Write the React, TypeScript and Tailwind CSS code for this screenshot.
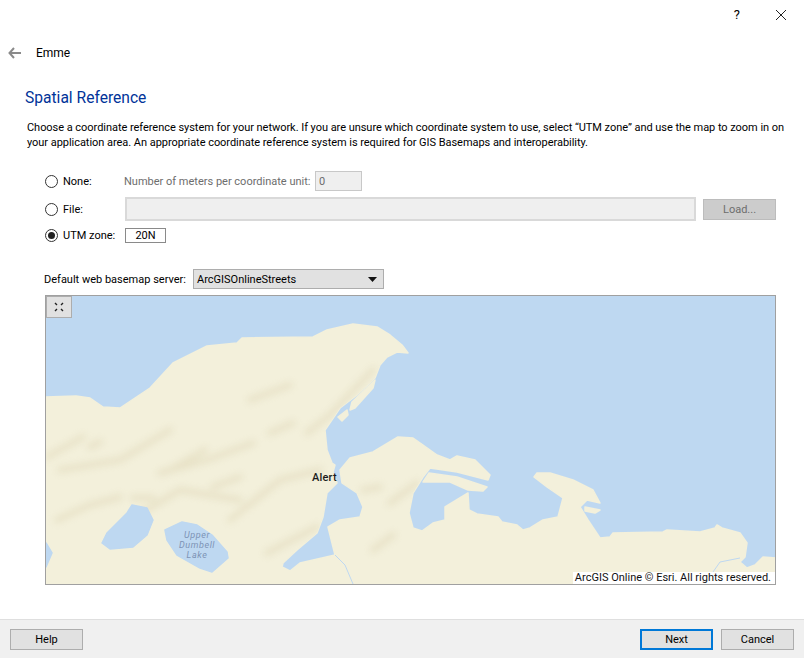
const LAND =
  "M46 397 L76 396 L90 398 L103 407 L120 408 L150 388 L173 363 L207 346 L237 343 L242 338 L313 337 L327 330 L353 324 L377 327 L390 335 L402 345 L408 353 L397 352 L387 357 L380 365 L375 378 L357 395 L340 408 L325 430 L327 450 L332 463 L335 465 L333 472 L337 483 L327 493 L323 517 L317 533 L297 550 L283 563 L282 567 L290 571 L300 563 L335 555 L328 527 L340 520 L360 517 L363 507 L357 493 L342 483 L340 470 L350 458 L373 452 L398 437 L413 438 L423 445 L437 455 L450 460 L457 456 L475 460 L490 475 L488 480 L457 472 L430 468 L423 477 L413 493 L409 513 L413 528 L422 531 L433 523 L445 520 L445 507 L468 493 L469 510 L477 514 L498 517 L502 522 L517 525 L523 530 L530 528 L543 520 L558 517 L563 498 L547 487 L534 477 L537 473 L550 473 L573 480 L593 490 L600 503 L587 500 L580 507 L588 520 L600 538 L610 537 L613 533 L663 532 L667 530 L700 532 L715 528 L717 525 L722 528 L740 533 L747 543 L745 557 L740 562 L747 568 L755 565 L763 557 L776 558 L776 585 L46 585 Z";

const HILLS = [
  "M47 457 L83 437",
  "M90 447 L100 442",
  "M57 520 L90 505 L120 497",
  "M133 498 L153 498",
  "M160 473 L207 460 L253 443",
  "M170 470 L205 450",
  "M213 487 L240 477",
  "M270 433 L293 423",
  "M307 433 L330 415 L373 370",
  "M267 553 L317 527",
  "M373 550 L393 535",
  "M390 503 L417 483",
  "M363 490 L380 487",
  "M130 520 L180 490 L240 500",
  "M230 520 L280 480 L320 470",
  "M250 400 L290 385",
  "M60 470 L120 460 L170 430",
];

export default function App() {
  return (
    <div className="relative flex h-[658px] w-[804px] flex-col overflow-hidden bg-white font-['Roboto','Open_Sans',sans-serif] text-[11px] leading-[15px] text-black">
      <div className="flex h-[29px] items-center justify-end">
        <span className="mr-[35px] text-[13px]">?</span>
        <svg width="12" height="12" viewBox="0 0 12 12" className="mr-[17px]">
          <path d="M1 1 L11 11 M11 1 L1 11" stroke="#222" strokeWidth="1" fill="none" />
        </svg>
      </div>

      <div className="mt-[14px] flex h-[20px] items-center pl-[8px]">
        <svg width="13" height="12" viewBox="0 0 13 12">
          <path d="M6 1 L1.5 6 L6 11 M1.5 6 L13 6" stroke="#8a8a8a" strokeWidth="2" fill="none" />
        </svg>
        <span className="ml-[15px] text-[12px]">Emme</span>
      </div>

      <h1 className="mt-[25px] ml-[25px] text-[15.6px] leading-[20px] text-[#003399]">Spatial Reference</h1>

      <p className="mt-[12px] ml-[27px] w-[765px] tracking-[-0.04px]">
        Choose a coordinate reference system for your network. If you are unsure which coordinate system to use, select “UTM zone” and use the map to zoom in on your application area. An appropriate coordinate reference system is required for GIS Basemaps and interoperability.
      </p>

      <div className="mt-[21px] ml-[45px] flex h-[20px] items-center">
        <Radio />
        <span className="ml-[5px] w-[61px]">None:</span>
        <span className="w-[191px] text-[#6d6d6d]">Number of meters per coordinate unit:</span>
        <div className="flex h-[20px] w-[47px] items-center border border-[#c8c8c8] bg-[#efefef] pl-[3px] text-[#6d6d6d]">0</div>
      </div>

      <div className="mt-[6px] ml-[45px] flex h-[24px] items-center">
        <Radio />
        <span className="ml-[5px] w-[62px]">File:</span>
        <div className="h-[24px] w-[571px] border-2 border-[#d9d9d9] bg-[#efefef]" />
        <div className="ml-[7px] flex h-[21px] w-[73px] items-center justify-center border border-[#bcbcbc] bg-[#cccccc] text-[#6d6d6d]">Load...</div>
      </div>

      <div className="mt-[7px] ml-[45px] flex h-[15px] items-center">
        <Radio checked />
        <span className="ml-[5px] w-[62px]">UTM zone:</span>
        <div className="flex h-[15px] w-[41px] items-center justify-center border border-[#8a8a8a]">20N</div>
      </div>

      <div className="mt-[26px] ml-[44px] flex h-[20px] items-center">
        <span className="w-[149px]">Default web basemap server:</span>
        <div className="flex h-[20px] w-[191px] items-center justify-between border border-[#adadad] bg-[#e1e1e1] pr-[6px] pl-[3px]">
          ArcGISOnlineStreets
          <svg width="9" height="5" viewBox="0 0 9 5">
            <path d="M0 0 L9 0 L4.5 5 Z" fill="#111" />
          </svg>
        </div>
      </div>

      <div className="relative mt-[6px] ml-[45px] h-[290px] w-[731px] overflow-hidden border border-[#a0a0a0] bg-[#bed8f1]">
        <svg width="729" height="288" viewBox="46 296 729 288" className="block">
          <defs>
            <filter id="hillBlur" x="-30%" y="-30%" width="160%" height="160%">
              <feGaussianBlur stdDeviation="3.5" />
            </filter>
            <filter id="soften" x="-2%" y="-2%" width="104%" height="104%">
              <feGaussianBlur stdDeviation="0.5" />
            </filter>
            <clipPath id="landClip">
              <path d={LAND} />
            </clipPath>
          </defs>
          <g filter="url(#soften)" stroke="#f3f0db" strokeWidth="1.5" strokeLinejoin="round" fill="#f3f0db">
            <path d={LAND} />
            <path d="M429 473 L457 477 L487 487 L483 491 L468 490 L450 482 L423 482 Z" />
            <path d="M585 507 L600 510 L595 513 L585 511 Z" />
            <path d="M375 380 L373 388 L355 408 L350 410 L352 402 Z" />
            <path d="M338 417 L347 410 L348 415 L342 421 Z" />
          </g>
          <g clipPath="url(#landClip)">
            <g filter="url(#hillBlur)" stroke="#d0c49c" strokeWidth="6" strokeLinecap="round" fill="none" opacity="0.3">
              {HILLS.map((d) => (
                <path key={d} d={d} />
              ))}
            </g>
          </g>
          <g filter="url(#soften)" stroke="#bed8f1" strokeWidth="1.5" strokeLinejoin="round" fill="#bed8f1">
            <path d="M132 505 L147 508 L153 520 L147 535 L133 547 L110 549 L102 543 L107 533 L127 513 Z" />
            <path d="M182 522 L165 530 L167 540 L177 555 L200 568 L212 572 L228 558 L227 552 L212 535 L197 525 Z" />
            <path d="M46 543 L52 553 L46 567 Z" />
          </g>
          <path d="M335 555 L345 565 L353 584" stroke="#bed8f1" strokeWidth="1" fill="none" />
          <path d="M740 558 L720 562 L713 572" stroke="#bed8f1" strokeWidth="1" fill="none" />
        </svg>

        <button className="absolute top-0 left-0 flex h-[22px] w-[26px] items-center justify-center border border-[#adadad] bg-[#e1e1e1]">
          <svg width="10" height="10" viewBox="0 0 10 10">
            <path d="M1 1 L3 3 M9 1 L7 3 M1 9 L3 7 M9 9 L7 7" stroke="#222" strokeWidth="1.4" fill="none" />
          </svg>
        </button>

        <span className="absolute top-[175px] left-[266px] text-[11px] font-medium leading-[14px] tracking-[0.2px] text-[#1c1c1c]">Alert</span>
        <div className="absolute top-[234px] left-[126px] w-[50px] text-center text-[9px] italic leading-[10px] tracking-[0.6px] text-[#7d93b5]">
          Upper
          <br />
          Dumbell
          <br />
          Lake
        </div>
        <div className="absolute right-0 bottom-0 h-[12px] bg-white pr-[4px] pl-[2px] text-[11px] leading-[12px] text-[#111]">
          ArcGIS Online © Esri. All rights reserved.
        </div>
      </div>

      <div className="mt-auto flex h-[39px] items-center justify-between border-t border-[#dfdfdf] bg-[#f0f0f0] pr-[10px] pl-[10px]">
        <FooterButton label="Help" />
        <div className="flex gap-[8px]">
          <FooterButton label="Next" primary />
          <FooterButton label="Cancel" />
        </div>
      </div>
    </div>
  );
}

function Radio({ checked = false }: { checked?: boolean }) {
  return (
    <span className="flex h-[13px] w-[13px] shrink-0 items-center justify-center rounded-full border border-[#333] bg-white">
      {checked && <span className="h-[7px] w-[7px] rounded-full bg-[#222]" />}
    </span>
  );
}

function FooterButton({ label, primary = false }: { label: string; primary?: boolean }) {
  return (
    <button
      className={
        primary
          ? "flex h-[21px] w-[73px] items-center justify-center border-2 border-[#0078d7] bg-[#e1e1e1]"
          : "flex h-[21px] w-[73px] items-center justify-center border border-[#adadad] bg-[#e1e1e1]"
      }
    >
      {label}
    </button>
  );
}
